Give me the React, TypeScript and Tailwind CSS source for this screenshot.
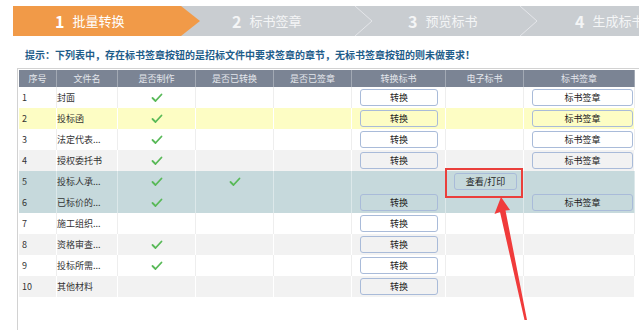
import React from 'react';

const COLS = 'grid w-[616px] grid-cols-[38px_61px_78px_78px_78px_94px_78px_111px]';

type Row = {
  no: number;
  name: string;
  made: boolean;
  converted: boolean;
  convertBtn: boolean;
  viewBtn: boolean;
  signBtn: boolean;
  tone: 'white' | 'gray' | 'yellow' | 'teal';
};

const ROWS: Row[] = [
  { no: 1, name: '封面', made: true, converted: false, convertBtn: true, viewBtn: false, signBtn: true, tone: 'white' },
  { no: 2, name: '投标函', made: true, converted: false, convertBtn: true, viewBtn: false, signBtn: true, tone: 'yellow' },
  { no: 3, name: '法定代表...', made: true, converted: false, convertBtn: true, viewBtn: false, signBtn: true, tone: 'white' },
  { no: 4, name: '授权委托书', made: true, converted: false, convertBtn: true, viewBtn: false, signBtn: true, tone: 'gray' },
  { no: 5, name: '投标人承...', made: true, converted: true, convertBtn: false, viewBtn: true, signBtn: false, tone: 'teal' },
  { no: 6, name: '已标价的...', made: true, converted: false, convertBtn: true, viewBtn: false, signBtn: true, tone: 'teal' },
  { no: 7, name: '施工组织...', made: false, converted: false, convertBtn: true, viewBtn: false, signBtn: false, tone: 'white' },
  { no: 8, name: '资格审查...', made: true, converted: false, convertBtn: true, viewBtn: false, signBtn: false, tone: 'gray' },
  { no: 9, name: '投标所需...', made: true, converted: false, convertBtn: true, viewBtn: false, signBtn: false, tone: 'white' },
  { no: 10, name: '其他材料', made: false, converted: false, convertBtn: true, viewBtn: false, signBtn: false, tone: 'gray' },
];

const TONE: Record<Row['tone'], string> = {
  white: 'bg-white',
  gray: 'bg-[#f2f2f2]',
  yellow: 'bg-[#fdfdc4]',
  teal: 'bg-[#c6d9dc]',
};

const SEP: Record<Row['tone'], string> = {
  white: 'border-[#eeeeee]',
  gray: 'border-white',
  yellow: 'border-white',
  teal: 'border-[#dce8ea]',
};

function Check() {
  return (
    <svg width="12" height="10" viewBox="0 0 12 10">
      <polyline points="1.5,5 4.5,8 10.5,1.5" fill="none" stroke="#58b957" strokeWidth="1.8" strokeLinecap="round" strokeLinejoin="round" />
    </svg>
  );
}

function Btn({ w, label }: { w: string; label: string }) {
  return (
    <div className={`${w} h-[17px] rounded-[3px] border border-[#a9bbd9] flex items-center justify-center text-[9px] text-[#222]`}>
      {label}
    </div>
  );
}

function Chevron() {
  return (
    <svg width="18" height="30" viewBox="0 0 18 30" className="shrink-0">
      <polyline points="0,0 17,15 0,30" fill="none" stroke="#e4e6e9" strokeWidth="1" />
    </svg>
  );
}

export default function App() {
  const cell = 'h-[21px] flex items-center border-r';
  return (
    <div className="relative w-[639px] h-[330px] bg-white overflow-hidden" style={{ fontFamily: '"Noto Sans CJK SC", "Noto Sans", sans-serif' }}>
      {/* Steps */}
      <div className="pt-[6px]">
        <div className="ml-[13px] h-[30px] flex bg-[#c9cdd1] text-white">
          <div className="w-[187px] shrink-0 bg-[#f19a48] flex items-center pl-[42px] gap-[8px] [clip-path:polygon(0_0,168px_0,187px_50%,168px_100%,0_100%)]">
            <span className="text-[16px] font-bold">1</span>
            <span className="text-[13px]">批量转换</span>
          </div>
          <div className="w-[155px] shrink-0 flex items-center pl-[32px] gap-[8px] text-[#f4f5f6]">
            <span className="text-[16px] font-bold">2</span>
            <span className="text-[13px]">标书签章</span>
          </div>
          <Chevron />
          <div className="w-[147px] shrink-0 flex items-center pl-[35px] gap-[8px] text-[#f4f5f6]">
            <span className="text-[16px] font-bold">3</span>
            <span className="text-[13px]">预览标书</span>
          </div>
          <Chevron />
          <div className="flex items-center pl-[37px] gap-[8px] whitespace-nowrap text-[#f4f5f6]">
            <span className="text-[16px] font-bold">4</span>
            <span className="text-[13px]">生成标书</span>
          </div>
        </div>
      </div>

      {/* Hint */}
      <div className="pl-[25px] pt-[11px] h-[32px] text-[10px] font-bold text-[#1f5d8a] whitespace-nowrap">
        提示：下列表中，存在标书签章按钮的是招标文件中要求签章的章节，无标书签章按钮的则未做要求！
      </div>

      {/* Table panel */}
      <div className="ml-[17px] border-l border-t border-[#d2d2d2] h-[262px] pl-[1px] pt-[1px]">
        <div className={`${COLS} h-[17px] bg-[#7b8494] text-[9px] text-[#e4e7ec]`}>
          {['序号', '文件名', '是否制作', '是否已转换', '是否已签章', '转换标书', '电子标书', '标书签章'].map((h) => (
            <div key={h} className="flex items-center justify-center border-r border-[#a2a9b4]">{h}</div>
          ))}
        </div>
        {ROWS.map((r) => (
          <div key={r.no} className={`${COLS} ${TONE[r.tone]} text-[9px] text-[#333]`}>
            <div className={`${cell} ${SEP[r.tone]} pl-[3px]`}>{r.no}</div>
            <div className={`${cell} ${SEP[r.tone]} whitespace-nowrap`}>{r.name}</div>
            <div className={`${cell} ${SEP[r.tone]} justify-center`}>{r.made && <Check />}</div>
            <div className={`${cell} ${SEP[r.tone]} justify-center`}>{r.converted && <Check />}</div>
            <div className={`${cell} ${SEP[r.tone]}`} />
            <div className={`${cell} ${SEP[r.tone]} pl-[8px]`}>{r.convertBtn && <Btn w="w-[78px]" label="转换" />}</div>
            <div className={`${cell} ${SEP[r.tone]} pl-[8px]`}>{r.viewBtn && <Btn w="w-[63px]" label="查看/打印" />}</div>
            <div className={`${cell} ${SEP[r.tone]} pl-[8px]`}>{r.signBtn && <Btn w="w-[101px]" label="标书签章" />}</div>
          </div>
        ))}
      </div>

      {/* Annotation: red box + arrow */}
      <div className="absolute left-[445px] top-[168px] w-[78px] h-[30px] border-2 border-[#ea3f3b]" />
      <svg className="absolute left-0 top-0" width="639" height="330" viewBox="0 0 639 330">
        <polygon points="501,197 510,210 505.5,210.5 527,320 524.5,320 500,212 494.5,214" fill="#f03b3b" />
      </svg>
    </div>
  );
}
